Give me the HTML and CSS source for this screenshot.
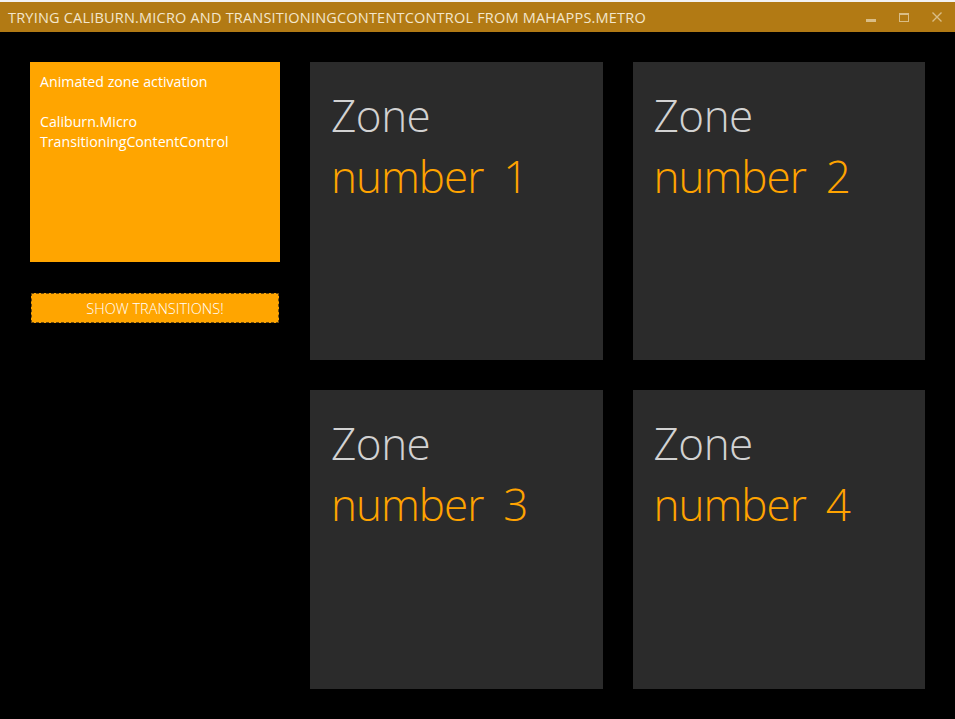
FILE: index.html
```html
<!DOCTYPE html>
<html>
<head>
<meta charset="utf-8">
<link rel="stylesheet" href="styles.css">
</head>
<body>
<div class="window">
  <div class="titlebar">
    <div class="title">TRYING CALIBURN.MICRO AND TRANSITIONINGCONTENTCONTROL FROM MAHAPPS.METRO</div>
    <div class="controls">
      <svg class="ctl" width="30" height="30" viewBox="0 0 30 30"><rect x="11" y="19" width="10" height="3" fill="#d9bd86"/></svg>
      <svg class="ctl" width="30" height="30" viewBox="0 0 30 30"><rect x="10.5" y="13.5" width="9" height="8" fill="none" stroke="#d9bd86" stroke-width="1"/><rect x="10" y="13" width="10" height="2" fill="#d9bd86"/></svg>
      <svg class="ctl" width="30" height="30" viewBox="0 0 30 30"><path d="M9.5 12.5 L18.5 21.5 M18.5 12.5 L9.5 21.5" stroke="#d9bd86" stroke-width="1.4"/></svg>
    </div>
  </div>
  <div class="content">
    <div class="side">
      <div class="info">
        <p class="info-line">Animated zone activation</p>
        <p class="info-line gap">Caliburn.Micro</p>
        <p class="info-line">TransitioningContentControl</p>
      </div>
      <button class="btn">SHOW TRANSITIONS!</button>
    </div>
    <div class="zones">
      <div class="zone"><div class="z1">Zone</div><div class="z2">number<span class="num">1</span></div></div>
      <div class="zone"><div class="z1">Zone</div><div class="z2">number<span class="num">2</span></div></div>
      <div class="zone"><div class="z1">Zone</div><div class="z2">number<span class="num">3</span></div></div>
      <div class="zone"><div class="z1">Zone</div><div class="z2">number<span class="num">4</span></div></div>
    </div>
  </div>
</div>
</body>
</html>
```
FILE: styles.css
```css
html, body {
  margin: 0;
  padding: 0;
  background: #000;
  height: 100%;
}
.window {
  width: 955px;
  height: 719px;
  border-top: 2px solid #f2f2f2;
  box-sizing: border-box;
  background: #000;
  font-family: "Open Sans", "Noto Sans", sans-serif;
}
.titlebar {
  height: 30px;
  background: #b27a14;
  display: flex;
  align-items: center;
  justify-content: space-between;
}
.title {
  padding-left: 8px;
  color: #f3e6cc;
  font-size: 14.5px;
  font-weight: 400;
  letter-spacing: 0.2px;
  white-space: nowrap;
}
.controls {
  display: flex;
  align-self: flex-start;
  margin-top: -2px;
}
.ctl {
  display: block;
  width: 34px;
  height: 30px;
}
.content {
  display: flex;
  padding: 30px 30px 0 30px;
  gap: 30px;
}
.side {
  width: 250px;
  display: flex;
  flex-direction: column;
}
.info {
  height: 200px;
  background: #ffa500;
  padding: 10px 10px;
  box-sizing: border-box;
}
.info-line {
  margin: 0;
  color: #fff;
  font-size: 14.2px;
  line-height: 20px;
}
.info-line.gap {
  margin-top: 20px;
}
.btn {
  margin: 31px 0 0 1px;
  width: 248px;
  height: 30px;
  background: #ffa500;
  border: 1px dashed #6b4a10;
  color: #fff;
  font-family: "Open Sans", "Noto Sans", sans-serif;
  font-size: 14.5px;
  font-weight: 300;
  padding: 0;
}
.zones {
  flex: 1;
  display: grid;
  grid-template-columns: 1fr 1fr;
  grid-template-rows: 298px 299px;
  column-gap: 30px;
  row-gap: 30px;
}
.zone {
  background: #2b2b2b;
  padding: 23px 0 0 21px;
}
.z1, .z2 {
  font-family: "Open Sans", "Noto Sans", sans-serif;
  font-weight: 300;
  font-size: 44px;
  line-height: 61px;
  letter-spacing: -0.5px;
}
.z1 {
  color: #d2d2d2;
}
.z2 {
  color: #ffa300;
  letter-spacing: -1px;
}
.num {
  margin-left: 20px;
}
```
